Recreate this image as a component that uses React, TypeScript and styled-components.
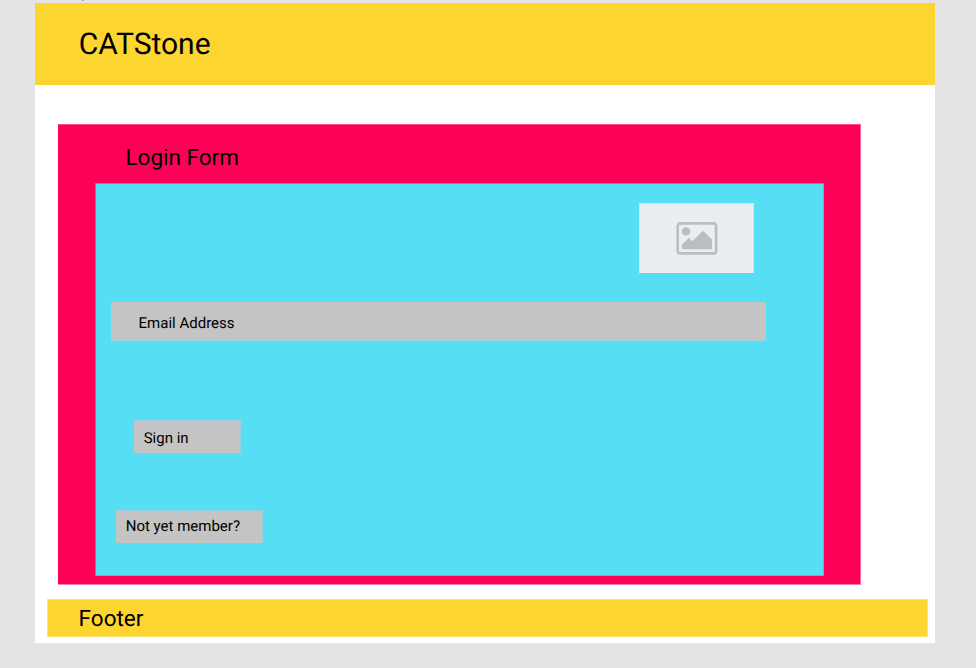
import React from "react";
import styled, { createGlobalStyle } from "styled-components";

const GlobalStyle = createGlobalStyle`
  * { box-sizing: border-box; }
  html, body, #root { margin: 0; height: 100%; }
  body { overflow: hidden; background: #e4e4e4; color: #000; font-family: Roboto, sans-serif; text-rendering: geometricPrecision; }
  h1, h2, p { margin: 0; font-weight: 400; }
`;

const Canvas = styled.div`
  width: 976px;
  height: 668px;
  padding: 0 41px 25px 35px;
  background: #e4e4e4;
`;

const CanvasEdge = styled.div`
  height: 3px;
  padding-left: 47px;
`;

const LabelTail = styled.div`
  width: 2px;
  height: 1px;
  background: #a6a6a6;
`;

const Page = styled.div`
  display: flex;
  flex-direction: column;
  width: 900px;
  height: 640px;
  background: #fff;
`;

const Header = styled.header`
  height: 82px;
  padding: 24px 0 0 43.8px;
  background: #fdd530;
`;

const Title = styled.h1`
  font-size: 30px;
  line-height: 36px;
  white-space: nowrap;
`;

const LoginPanel = styled.main`
  width: 803px;
  height: 461px;
  margin: 39px 0 0 23px;
  padding: 19px 36px 8px 37px;
  background: #ff0059;
  border: solid;
  border-width: 1px 1px 1px 0;
  border-color: #ff4d8b #ff6699 #ff80ac;
`;

const PanelTitle = styled.h2`
  height: 39px;
  padding-left: 30.5px;
  font-size: 22.5px;
  line-height: 28px;
`;

const Form = styled.form`
  display: flex;
  flex-direction: column;
  align-items: flex-start;
  width: 729px;
  height: 393px;
  padding: 19px 0 0 15px;
  background: #55def4;
  border: 1px solid #7aaac8;
  border-top-color: #b36a9c;
  border-left-color: #b36a9c;
`;

const Picture = styled.div`
  display: flex;
  align-items: center;
  justify-content: center;
  width: 115px;
  height: 70px;
  margin-left: 528px;
  background: #e8eef1;
  border: solid #c4ebf2;
  border-width: 1px 1px 0 1px;
`;

const Field = styled.div`
  width: 655px;
  height: 39px;
  margin-top: 29px;
  padding: 11px 0 0 27.6px;
  background: #c4c4c4;
  border: solid #a0cedb;
  border-width: 0 0 1px 0;
  font-size: 15px;
  line-height: 20px;
`;

const Button = styled.button<{ $width: number; $indent: number; $gap: number; $top: number }>`
  display: flex;
  width: ${(p) => p.$width}px;
  height: 33px;
  margin: ${(p) => p.$gap}px 0 0 ${(p) => p.$indent}px;
  padding: ${(p) => p.$top}px 0 0 9.7px;
  border: solid #a0cedb;
  border-width: 1px 1px 0 0;
  background: #c4c4c4;
  color: #000;
  font: 15px/20px Roboto, sans-serif;
  text-rendering: inherit;
  white-space: nowrap;
`;

const Footer = styled.footer`
  width: 881px;
  height: 38px;
  margin: 14px 0 0 12px;
  padding: 5px 0 0 30.6px;
  background: #fdd530;
  border: 1px solid #fee175;
  font-size: 22.5px;
  line-height: 28px;
`;

const ImageIcon = () => (
  <svg width="42" height="33" viewBox="0 0 42 33">
    <rect x="1.7" y="1.4" width="38.4" height="30" rx="2.5" fill="none" stroke="#babec0" strokeWidth="2.6" />
    <circle cx="10.1" cy="9.4" r="4.2" fill="#babec0" />
    <path d="M6 27.3V22.5L12.9 15.8L16.3 19.2L27 8.8L36 17.6V27.3Z" fill="#babec0" />
  </svg>
);

export default function App() {
  return (
    <>
      <GlobalStyle />
      <Canvas>
        <CanvasEdge><LabelTail /></CanvasEdge>
        <Page>
          <Header><Title>CATStone</Title></Header>
          <LoginPanel>
            <PanelTitle>Login Form</PanelTitle>
            <Form>
              <Picture><ImageIcon /></Picture>
              <Field>Email Address</Field>
              <Button type="button" $width={107} $indent={23} $gap={79} $top={7}>Sign in</Button>
              <Button type="button" $width={147} $indent={5} $gap={57} $top={5}>Not yet member?</Button>
            </Form>
          </LoginPanel>
          <Footer>Footer</Footer>
        </Page>
      </Canvas>
    </>
  );
}
